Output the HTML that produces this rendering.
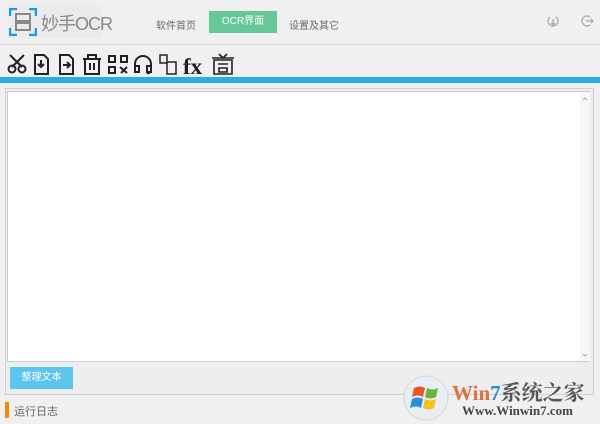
<html><head><style>
body{margin:0;width:600px;height:424px;background:#f0f0f0;font-family:"Liberation Sans","Noto Sans CJK SC",sans-serif;position:relative;overflow:hidden}
.a{position:absolute}
</style></head><body>
<div class="a" style="left:8px;top:5px;width:94px;height:33px;background:#ebebeb"></div>
<svg class="a" style="left:9px;top:8px" width="28" height="28" viewBox="0 0 28 28" fill="none" stroke="#1a9be0" stroke-width="2.5"><path d="M1 8V1h7M20 1h7v7M27 20v7h-7M8 27H1v-7"/><rect x="7" y="6" width="14" height="7" stroke="#888" stroke-width="2"/><rect x="7" y="15" width="14" height="7" stroke="#888" stroke-width="2"/></svg>
<div class="a" style="left:41px;top:10px;font-size:18px;letter-spacing:-1px;color:#888">妙手OCR</div>
<div class="a" style="left:156px;top:17px;font-size:10px;color:#666">软件首页</div>
<div class="a" style="left:209px;top:11px;width:68px;height:22px;background:#66c898;color:#fff;font-size:10px;text-align:center;line-height:22px">OCR界面</div>
<div class="a" style="left:289px;top:17px;font-size:10px;color:#666">设置及其它</div>
<svg class="a" style="left:546px;top:14px" width="50" height="14" fill="none" stroke="#aaa" stroke-width="1.3"><path d="M4 3A5 5 0 1 0 10 3M7 5v6M5 9l2 2 2-2"/><path d="M44 3A5 5 0 1 0 44 11M40 7h7M45 5l2 2-2 2"/></svg>
<div class="a" style="left:0;top:44px;width:600px;height:1px;background:#dcdcdc"></div>
<svg class="a" style="left:7px;top:52px" width="230" height="24" fill="none" stroke="#222" stroke-width="2">
<circle cx="5" cy="17" r="3.5"/><circle cx="15" cy="17" r="3.5"/><path d="M3 3l12 12M17 3L5 15"/>
<path d="M28 3h9l4 4v15H28zM34 8v7M31 12l3 3 3-3"/>
<path d="M53 3h9l4 4v15H53zM56 13h7M60 10l3 3-3 3"/>
<path d="M76 7h18M81 7V3h8v4M78 7v15h14V7M83 11v7M87 11v7"/>
<path d="M102 4h6v6h-6zM114 4h6v6h-6zM102 15h6v6h-6zM113 15l7 6M120 15l-6 6"/>
<path d="M128 20v-8a8 8 0 0 1 16 0v6a3 3 0 0 1-4 3M128 14h4v6h-4zM140 14h4v6h-4z"/>
<path d="M153 3h7v8h-7zM160 10h9v12h-9z" stroke-width="1.5"/>
<text x="176" y="22" font-size="23" font-weight="bold" font-family="Liberation Serif" fill="#222" stroke="none">fx</text>
<path d="M207 8h18v14h-18zM205 6h22M212 2l4 4 4-4M211 12h10M212 16h8v4h-8z" stroke-width="1.6"/>
</svg>
<div class="a" style="left:0;top:77px;width:600px;height:6px;background:#2aaee0"></div>
<div class="a" style="left:5px;top:88px;width:587px;height:305px;border:1px solid #d0d0d0;background:#eeeeee"></div>
<div class="a" style="left:7px;top:91px;width:583px;height:271px;background:#fff;border:1px solid #ccc;box-sizing:border-box"></div>
<div class="a" style="left:580px;top:92px;width:10px;height:269px;background:#f7f7f7"></div>
<svg class="a" style="left:580px;top:92px" width="10" height="269" fill="none" stroke="#aaa" stroke-width="1"><path d="M3 8l2-2 2 2M3 262l2 2 2-2"/></svg>
<div class="a" style="left:10px;top:367px;width:63px;height:22px;background:#5cc5eb;color:#fff;font-size:10px;text-align:center;line-height:22px">整理文本</div>
<div class="a" style="left:5px;top:402px;width:4px;height:16px;background:#f58a00"></div>
<div class="a" style="left:14px;top:403px;font-size:11px;color:#666">运行日志</div>
<svg class="a" style="left:402px;top:374px" width="48" height="48"><circle cx="24" cy="24" r="22" fill="#e8eef2" stroke="#d0d8dd"/><path d="M12 14q6-3 11 0l-2 9q-5-3-11 0z" fill="#e8562a"/><path d="M25 14q6 3 11 0l-2 9q-5 3-11 0z" fill="#6cb33e"/><path d="M10 25q6-3 11 0l-2 9q-5-3-11 0z" fill="#2b8fd8"/><path d="M23 25q6 3 11 0l-2 9q-5 3-11 0z" fill="#f5c21b"/></svg>
<div class="a" style="left:452px;top:377px;font-size:21px;font-weight:bold;font-family:'Liberation Serif','Noto Serif CJK SC',serif;color:#e07040">Win<span style="color:#2a8fd0">7</span><span style="color:#555">系统之家</span></div>
<div class="a" style="left:462px;top:403px;font-size:13px;font-weight:bold;font-family:'Liberation Serif',serif;color:#444">Www.Winwin7.com</div>
</body></html>
